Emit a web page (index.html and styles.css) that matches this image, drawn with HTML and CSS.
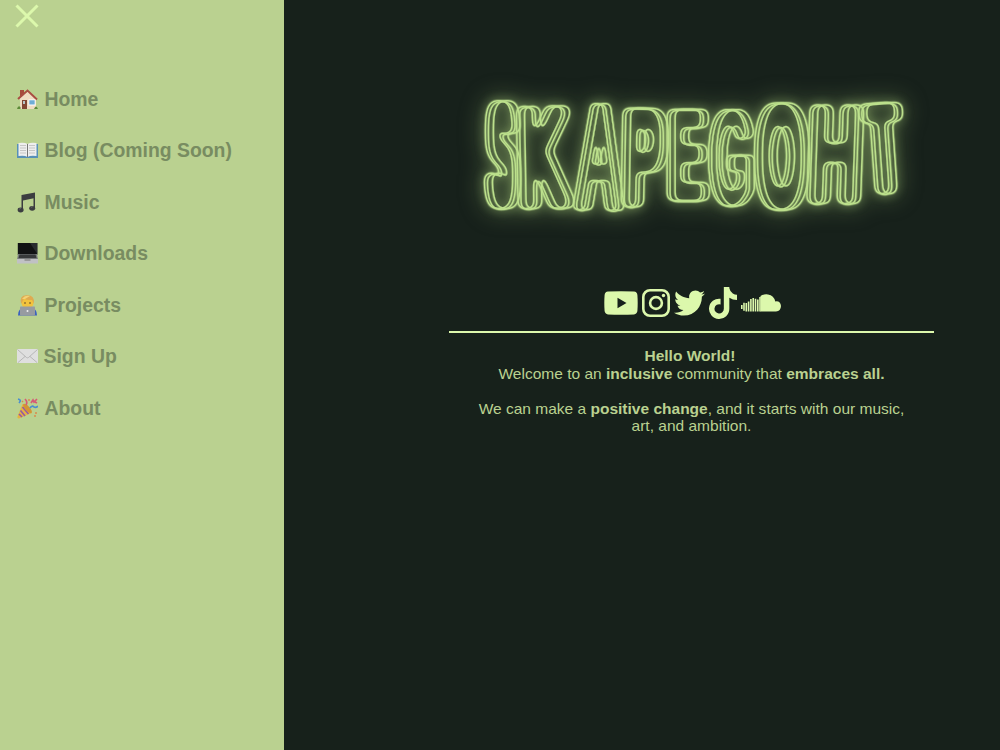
FILE: index.html
```
<!DOCTYPE html>
<html lang="en">
<head>
<meta charset="utf-8">
<title>SKAPEGOHT</title>
<link rel="stylesheet" href="styles.css">
</head>
<body>
<div class="page">
<nav class="sidebar">
  <button class="close" aria-label="Close menu"><svg viewBox="0 0 24 24"><path d="M1.5 1.5l21 21M22.500 1.500l-21 21"/></svg></button>
  <ul class="menu">
    <li><a><svg class="emoji" viewBox="0 0 21 21"><path fill="#a64a3c" d="M3 1h4v7H3z"/><path fill="#efdcc2" d="M3 9l8-7 8 8v10H3z"/><path fill="none" stroke="#a94d42" stroke-width="2" d="M1 10L10.500 1.600 20 10.500"/><path fill="#824734" d="M5 11h5v9H5z"/><path fill="#b8c5c7" d="M6 12h2v3H6z"/><path fill="#fff" d="M11.500 10.500h7v6h-7z"/><path fill="#6facd5" d="M12.300 11.300h5.400v4.200h-5.400z"/><path fill="#5d8b37" d="M0 20q1-4 3.500-2v2zM17 20q2-5 4 0z"/></svg><span>Home</span></a></li>
    <li><a><svg class="emoji" viewBox="0 0 21 21"><path fill="#5790b8" d="M0 4h21v14H0z"/><path fill="#eee" d="M1.500 3q6-1 9 1 3-2 9-1v13q-6-1-9 1-3-2-9-1z"/><path fill="none" stroke="#bbb" stroke-width=".8" d="M3 5.500h6M3 8h6M3 10.500h6M3 13h6M12 5.500h6M12 8h6M12 10.500h6M12 13h6"/><path stroke="#777" d="M10.500 4v13"/></svg><span>Blog (Coming Soon)</span></a></li>
    <li><a><svg class="emoji" viewBox="0 0 21 21"><path fill="#3b3d40" d="M4.500 3L18 .5v5.500L6 8.500v9H4.500z"/><path fill="#3b3d40" d="M16.500 4H18v12h-1.500z"/><ellipse cx="3.600" cy="18" rx="3" ry="2.400" fill="#3b3d40"/><ellipse cx="15.200" cy="16.300" rx="3" ry="2.400" fill="#3b3d40"/><path stroke="#777" stroke-width=".6" d="M2 17.300l2-1M14 15.500l2-1"/></svg><span>Music</span></a></li>
    <li><a><svg class="emoji" viewBox="0 0 21 21"><path fill="#111214" d="M.8 0h19.500v12H.8z"/><path fill="#292c30" d="M13 0h7.300v11z"/><path fill="#777a7c" d="M1 11h19l1 6H0z"/><path fill="#37393b" d="M2.500 11.500h16l1 3.500h-18z"/><path fill="#c0c1c4" d="M0 16h21v4.500H0z"/><path fill="#999" d="M7.500 16h6v2h-6z"/></svg><span>Downloads</span></a></li>
    <li><a><svg class="emoji" viewBox="0 0 21 21"><path fill="#3c62bd" d="M1 20.500q0-7.500 6-7.500h7q6 0 6 7.500z"/><ellipse cx="10.500" cy="7.500" rx="6" ry="6.700" fill="#f3c33d"/><path fill="#dfaa50" d="M4 9Q2 0 10 .3 18 0 17 9l-2-4Q9 5 7 3.500 6 6 4 9z"/><path fill="#f2d277" d="M5 4Q8-.5 13 1L8 4z"/><circle cx="8" cy="8" r=".8" fill="#56402b"/><circle cx="13" cy="8" r=".8" fill="#56402b"/><rect x="3" y="11.500" width="15" height="9" rx=".8" fill="#979ba1"/><circle cx="10.500" cy="16" r="1" fill="#eee"/></svg><span>Projects</span></a></li>
    <li><a><svg class="emoji" viewBox="0 0 21 21"><rect y="3" width="21" height="14" rx=".8" fill="#dfdfdf"/><path fill="none" stroke="#b2b2b2" stroke-width=".9" d="M.5 3.500l9 8q1 .8 2 0l9-8M1 16.500l7-6M20 16.500l-7-6"/></svg><span class="tight">Sign Up</span></a></li>
    <li><a><svg class="emoji" viewBox="0 0 21 21"><path fill="#e5b342" d="M5.500 6Q13 8 14.500 15L2 20.500q-2 .3-1.500-2z"/><path fill="none" stroke="#965ca3" stroke-width="1.700" d="M5.500 9l6 7M3.500 12.500l4.500 5.500M2 16l3 3"/><ellipse cx="10.500" cy="10.500" rx="2.300" ry="6" fill="#d29535" transform="rotate(-43 10.500 10.500)"/><path fill="none" stroke="#4a8ed0" stroke-width="1.700" d="M1 1q4 1 1 4M13 10q2-3 4-1 2 1 4-1"/><path fill="none" stroke="#d65a76" stroke-width="1.700" d="M8 1q3 3 1 6M14 5l2-3 1 2 3-3M18 4l2 1"/><path fill="none" stroke="#d98b4d" stroke-width="1.500" d="M12 1v2M19 14v2M17 18h2M5 3l1 1"/></svg><span>About</span></a></li>
  </ul>
</nav>
<main class="main">
  <svg class="logo" viewBox="460 75 468 160" role="img" aria-label="SKAPEGOHT">
    <defs>
    <filter id="neon" filterUnits="userSpaceOnUse" x="460" y="75" width="468" height="160" color-interpolation-filters="sRGB">
      <feMorphology in="SourceAlpha" operator="dilate" radius="4"/>
      <feGaussianBlur stdDeviation="3.300"/>
      <feComponentTransfer><feFuncA type="linear" slope="9" intercept="-3.600"/></feComponentTransfer>
      <feGaussianBlur stdDeviation="1"/>
      <feComponentTransfer result="band"><feFuncA type="table" tableValues="0 .6 1 1 .6 0 0"/></feComponentTransfer>
      <feFlood flood-color="#bce08c"/><feComposite in2="band" operator="in" result="a"/>
      <feOffset in="a" dx="3" dy="1" result="b"/><feOffset in="a" dx="8" result="c"/>
      <feMerge><feMergeNode in="a"/><feMergeNode in="b"/><feMergeNode in="c"/></feMerge>
    </filter>
    <filter id="neon-thin" filterUnits="userSpaceOnUse" x="460" y="75" width="468" height="160" color-interpolation-filters="sRGB">
      <feMorphology in="SourceAlpha" operator="dilate" radius="2"/>
      <feGaussianBlur stdDeviation="2.200"/>
      <feComponentTransfer><feFuncA type="linear" slope="9" intercept="-3.200"/></feComponentTransfer>
      <feGaussianBlur stdDeviation="1"/>
      <feComponentTransfer result="band"><feFuncA type="table" tableValues="0 .6 1 1 .6 0 0"/></feComponentTransfer>
      <feFlood flood-color="#bce08c"/><feComposite in2="band" operator="in" result="a"/>
      <feOffset in="a" dx="3" dy="1" result="b"/><feOffset in="a" dx="8" result="c"/>
      <feMerge><feMergeNode in="a"/><feMergeNode in="b"/><feMergeNode in="c"/></feMerge>
    </filter>
    </defs>
    <g filter="url(#neon)"><text transform="translate(486.500 203) scale(.33 1.390)">S</text></g>
    <g filter="url(#neon)"><text transform="translate(516.300 204) rotate(-1) scale(.68 1.350)">K</text></g>
    <g filter="url(#neon-thin)"><text transform="translate(575 207) rotate(1) scale(.56 1.470)">A</text></g>
    <g filter="url(#neon)"><text transform="translate(620.600 202) rotate(1) scale(.54 1.300)">P</text></g>
    <g filter="url(#neon)"><text transform="translate(667 196) scale(.46 1.180)">E</text></g>
    <g filter="url(#neon-thin)"><text transform="translate(708 202) scale(.49 1.280)">G</text></g>
    <g filter="url(#neon)"><text transform="translate(755.400 204) scale(.55 1.380)">O</text></g>
    <g filter="url(#neon)"><text transform="translate(805.300 199) skewX(-2) scale(.65 1.300)">H</text></g>
    <g filter="url(#neon)"><text transform="translate(867 190) rotate(-4) scale(.46 1.180)">T</text></g>
  </svg>
  <div class="social">
    <svg width="34" height="24" viewBox="0 0 34 24"><path fill-rule="evenodd" d="M4 .6Q17-.2 30 .6q3 .3 3.400 3.400.6 8 0 16-.4 3-3.400 3.400-13 .8-26 0Q1 23 .6 20 0 12 .6 4 1 1 4 .6zM13.500 6.800v10.400L22.500 12z"/></svg>
    <svg width="28" height="28" viewBox="0 0 28 28"><g fill="none" stroke="#dcf8ac" stroke-width="2.600"><rect x="1.300" y="1.300" width="25.400" height="25.400" rx="6.700"/><circle cx="14" cy="14" r="5.900"/></g><circle cx="21.500" cy="6.500" r="1.700"/></svg>
    <svg width="31" height="26" viewBox="0 47 512 418"><path d="M459.370 151.716c.325 4.548.325 9.097.325 13.645 0 138.720-105.583 298.558-298.558 298.558-59.452 0-114.680-17.219-161.137-47.106 8.447.974 16.568 1.299 25.340 1.299 49.055 0 94.213-16.568 130.274-44.832-46.132-.975-84.792-31.188-98.112-72.772 6.498.974 12.995 1.624 19.818 1.624 9.421 0 18.843-1.300 27.614-3.573-48.081-9.747-84.143-51.980-84.143-102.985v-1.299c13.969 7.797 30.214 12.670 47.431 13.319-28.264-18.843-46.781-51.005-46.781-87.391 0-19.492 5.197-37.360 14.294-52.954 51.655 63.675 129.300 105.258 216.365 109.807-1.624-7.797-2.599-15.918-2.599-24.040 0-57.828 46.782-104.934 104.934-104.934 30.213 0 57.502 12.670 76.670 33.137 23.715-4.548 46.456-13.320 66.599-25.340-7.798 24.366-24.366 44.833-46.132 57.827 21.117-2.273 41.584-8.122 60.426-16.243-14.292 20.791-32.161 39.308-52.628 54.253z"/></svg>
    <svg width="28" height="32" viewBox="0 0 448 512"><path d="M448 209.910a210.060 210.060 0 0 1-122.770-39.250v178.720A162.550 162.550 0 1 1 185 188.310v89.890a74.620 74.620 0 1 0 52.230 71.180V0h88a121.180 121.180 0 0 0 1.860 22.170 122.180 122.180 0 0 0 53.910 80.220 121.430 121.430 0 0 0 67 20.140z"/></svg>
    <svg width="40" height="18" viewBox="0 0 40 18"><path d="M19.500 2Q23-.2 27 .4q6 1 7.300 7 5.200-.8 5.700 4.600-.2 5-5 5.500H19.500z"/><g fill="none" stroke="#dcf8ac" stroke-width="1.600"><path d="M.8 11v4M3 8.700v8M5.300 9v8.500M7.600 7.500v10M9.900 5v12.500M12.200 4v13.500M14.500 4.700v12.800M16.800 5.500v12M19 3v14.500"/></g></svg>
  </div>
  <hr class="rule">
  <div class="copy"><p><b class="hello">Hello World!</b><br>Welcome to an <b>inclusive</b> community that <b>embraces all.</b></p>
  <p>We can make a <b>positive change</b>, and it starts with our music,<br>art, and ambition.</p></div>
</main>
</div>
</body>
</html>
```
FILE: styles.css
```
* { box-sizing: border-box; }
body { margin: 0; background: #17211b; font-family: "Liberation Sans", Arial, sans-serif; }
.page { display: flex; height: 750px; overflow: hidden; }
.sidebar { width: 284px; flex: none; background: #bad190; padding: 4px 15px; }
.close { display: block; border: 0; padding: 0; background: none; width: 24px; height: 24px; }
.close svg { display: block; fill: none; stroke: #dcf8ac; stroke-width: 3; }
.menu { list-style: none; margin: 59px 0 0; padding: 0 0 0 1.500px; }
.menu li { height: 51.500px; }
.menu a { display: flex; align-items: center; height: 24px; color: #788c61; font-size: 19.400px; font-weight: bold; white-space: nowrap; }
.emoji { width: 21px; height: 21px; margin-right: 7px; flex: none; }
.tight { margin-left: -1px; }
.main { flex: 1; display: flex; flex-direction: column; align-items: center; padding: 75px 2px 0 100px; }
.logo { width: 468px; height: 160px; margin-left: 8px; overflow: visible; filter: drop-shadow(0 0 5px #a9cc7a98) drop-shadow(0 0 11px #a9cc7a98); }
.logo text { font-size: 100px; }
.social { display: flex; align-items: center; gap: 4px; height: 32px; margin: 52px 0 0 2px; fill: #dcf8ac; }
.rule { width: 485px; height: 2px; margin: 12px 0 0; border: 0; background: #dcf8ac; }
.copy { margin: 14px 0 0 1px; color: #bad190; font-size: 15.520px; line-height: 17.500px; text-align: center; white-space: nowrap; }
.copy p { margin: 0 0 17.500px; }
.hello { margin-right: 3px; }
```
